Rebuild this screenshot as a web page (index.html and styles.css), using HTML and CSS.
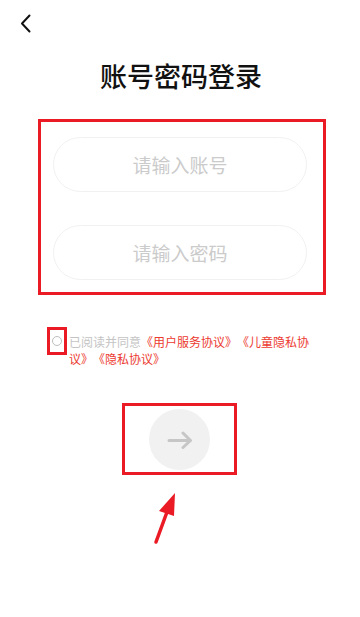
FILE: index.html
```html
<!DOCTYPE html>
<html lang="zh-CN">
<head>
<meta charset="utf-8">
<title>账号密码登录</title>
<link rel="stylesheet" href="styles.css">
</head>
<body>
<div class="page">
  <div class="topbar">
    <svg class="back" width="12" height="20" viewBox="0 0 12 20"><path d="M9.5 1.5 L2 9.5 L9.5 17.5" fill="none" stroke="#111" stroke-width="2" stroke-linecap="round" stroke-linejoin="round"/></svg>
  </div>
  <h1 class="title">账号密码登录</h1>
  <div class="mark fields">
    <div class="field">请输入账号</div>
    <div class="field">请输入密码</div>
  </div>
  <div class="agree">
    <div class="mark check"><span class="circle"></span></div>
    <p class="agree-text"><span class="muted">已阅读并同意</span><span class="link">《用户服务协议》《儿童隐私协议》《隐私协议》</span></p>
  </div>
  <div class="mark submit-box">
    <div class="submit">
      <svg width="26" height="18" viewBox="0 0 26 18"><path d="M2 9.5 H23.5 M16 2 L23.5 9.5 L16 16.5" fill="none" stroke="#c6c6c6" stroke-width="3" stroke-linecap="round" stroke-linejoin="round"/></svg>
    </div>
  </div>
  <svg class="pointer" width="30" height="56" viewBox="0 0 30 56"><path d="M6 52 L17 22" fill="none" stroke="#ea1b24" stroke-width="3.5" stroke-linecap="round"/><path d="M25 3 L9 21 L24 26 Z" fill="#ea1b24"/></svg>
</div>
</body>
</html>
```
FILE: styles.css
```css
html, body {
  margin: 0;
  padding: 0;
  background: #fff;
}
body {
  font-family: "Noto Sans CJK SC", "Noto Sans", sans-serif;
  color: #111;
}
.page {
  display: flex;
  flex-direction: column;
  width: 360px;
  height: 617px;
  overflow: hidden;
}
.topbar {
  height: 57px;
  box-sizing: border-box;
  padding: 14px 0 0 20px;
}
.back {
  display: block;
}
.title {
  margin: 0;
  padding-left: 2px;
  font-size: 27px;
  line-height: 38px;
  font-weight: 500;
  text-align: center;
  color: #111;
}
.mark {
  border: 3px solid #ea1b24;
  box-sizing: border-box;
}
.fields {
  margin: 24px 0 0 38px;
  width: 288px;
  padding: 15px 0 12px 12px;
  display: flex;
  flex-direction: column;
  gap: 33px;
}
.field {
  width: 254px;
  height: 55px;
  box-sizing: border-box;
  border: 1px solid #f1f1f1;
  border-radius: 28px;
  display: flex;
  align-items: center;
  justify-content: center;
  font-size: 19px;
  color: #cbcbcb;
}
.agree {
  margin-top: 32px;
  padding-left: 47px;
  display: flex;
  align-items: flex-start;
}
.check {
  width: 20px;
  height: 28px;
  display: flex;
  align-items: center;
  justify-content: center;
  flex: none;
}
.circle {
  width: 10px;
  height: 10px;
  box-sizing: border-box;
  border: 1px solid #bdbdbd;
  border-radius: 50%;
}
.agree-text {
  margin: 6px 0 0 2px;
  width: 245px;
  font-size: 12px;
  line-height: 17px;
  text-spacing-trim: space-all;
}
.muted {
  color: #c4c4c4;
}
.link {
  color: #ec3a2f;
}
.submit-box {
  margin: 36px 0 0 122px;
  width: 115px;
  height: 72px;
  display: flex;
  align-items: center;
  justify-content: center;
}
.submit {
  width: 61px;
  height: 61px;
  border-radius: 50%;
  background: #f1f1f1;
  display: flex;
  align-items: center;
  justify-content: center;
}
.submit svg {
  display: block;
  margin-top: 2px;
}
.pointer {
  display: block;
  margin: 15px 0 0 150px;
}
```
